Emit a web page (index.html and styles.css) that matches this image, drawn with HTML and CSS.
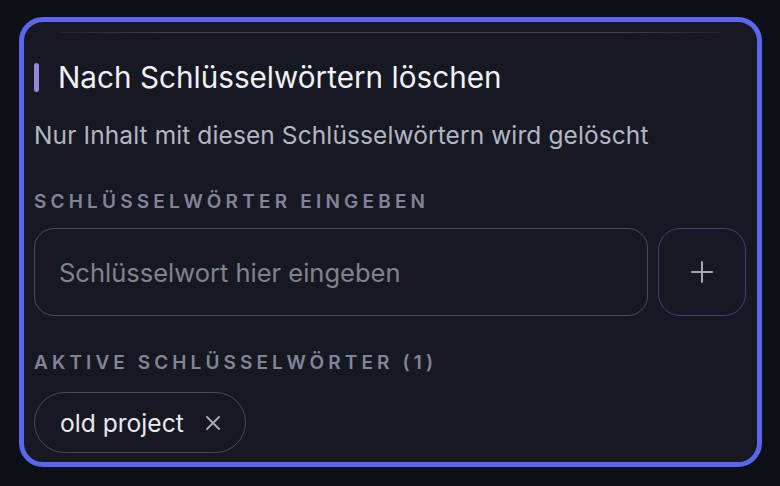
FILE: index.html
```html
<!DOCTYPE html>
<html lang="de">
<head>
<meta charset="utf-8">
<title>Nach Schlüsselwörtern löschen</title>
<link rel="stylesheet" href="styles.css">
</head>
<body>
<section class="card">
  <div class="divider"></div>
  <div class="title-row">
    <span class="accent"></span>
    <h2 class="title">Nach Schlüsselwörtern löschen</h2>
  </div>
  <p class="subtitle">Nur Inhalt mit diesen Schlüsselwörtern wird gelöscht</p>
  <div class="label">Schlüsselwörter eingeben</div>
  <div class="input-row">
    <input class="input" type="text" placeholder="Schlüsselwort hier eingeben">
    <button class="add-btn" type="button" aria-label="Hinzufügen">
      <svg width="22" height="22" viewBox="0 0 22 22"><path d="M11 1v20M1 11h20" stroke="#a3a6b3" stroke-width="2" stroke-linecap="round" fill="none"/></svg>
    </button>
  </div>
  <div class="label label-active">Aktive Schlüsselwörter (1)</div>
  <div class="chips">
    <span class="chip">old project
      <svg class="chip-x" width="16" height="16" viewBox="0 0 16 16"><path d="M2 2l12 12M14 2L2 14" stroke="#a3a6b3" stroke-width="2" stroke-linecap="round" fill="none"/></svg>
    </span>
  </div>
</section>
</body>
</html>
```

FILE: styles.css
```css
* { box-sizing: border-box; }
html, body { margin: 0; padding: 0; }
body {
  background: #0e1017;
  font-family: Inter, "Noto Sans", sans-serif;
  width: 780px;
  height: 486px;
  overflow: hidden;
  padding: 17px 0 0 19px;
}
.card {
  width: 743px;
  height: 450px;
  border: 5px solid #5a66ee;
  border-radius: 24px;
  background: #171922;
  padding: 10px 11px 0 10px;
  overflow: hidden;
}
.divider {
  height: 1px;
  margin: 0 25px 0 26px;
  background: linear-gradient(to right, rgba(70,73,86,0.2), #3e414d 15%, #3e414d 85%, rgba(70,73,86,0.2));
}
.title-row {
  display: flex;
  align-items: center;
  gap: 19px;
  margin-top: 28px;
  height: 32px;
}
.accent {
  width: 5px;
  height: 29px;
  border-radius: 3px;
  background: #9385e0;
  flex: none;
}
.title {
  margin: 0;
  font-size: 29.7px;
  font-weight: 400;
  line-height: 32px;
  color: #f0f1f7;
  white-space: nowrap;
}
.subtitle {
  margin: 28px 0 0;
  font-size: 24.5px;
  letter-spacing: 0.1px;
  line-height: 28px;
  color: #b2b6c4;
  white-space: nowrap;
}
.label {
  margin-top: 42px;
  font-size: 19px;
  line-height: 22px;
  font-weight: 600;
  letter-spacing: 4.2px;
  text-transform: uppercase;
  color: #81859a;
  white-space: nowrap;
}
.input-row {
  display: flex;
  gap: 10px;
  margin-top: 15px;
}
.input {
  flex: 1;
  min-width: 0;
  height: 88px;
  border: 1.5px solid #494b57;
  border-radius: 20px;
  background: transparent;
  padding: 0 24px;
  font-family: inherit;
  font-size: 25.5px;
  color: #e8eaf0;
  outline: none;
}
.input::placeholder { color: #7f828f; }
.add-btn {
  width: 88px;
  height: 88px;
  flex: none;
  border: 1.5px solid #403f7a;
  border-radius: 22px;
  background: transparent;
  display: flex;
  align-items: center;
  justify-content: center;
  padding: 0;
}
.label-active { margin-top: 36px; letter-spacing: 4.1px; }
.chips {
  display: flex;
  margin-top: 18px;
}
.chip {
  display: inline-flex;
  align-items: center;
  gap: 21px;
  height: 61px;
  padding: 0 24px 0 25px;
  border: 1.5px solid #494b57;
  border-radius: 31px;
  font-size: 24.6px;
  color: #e8eaf0;
  white-space: nowrap;
}
.chip-x { flex: none; }
```
